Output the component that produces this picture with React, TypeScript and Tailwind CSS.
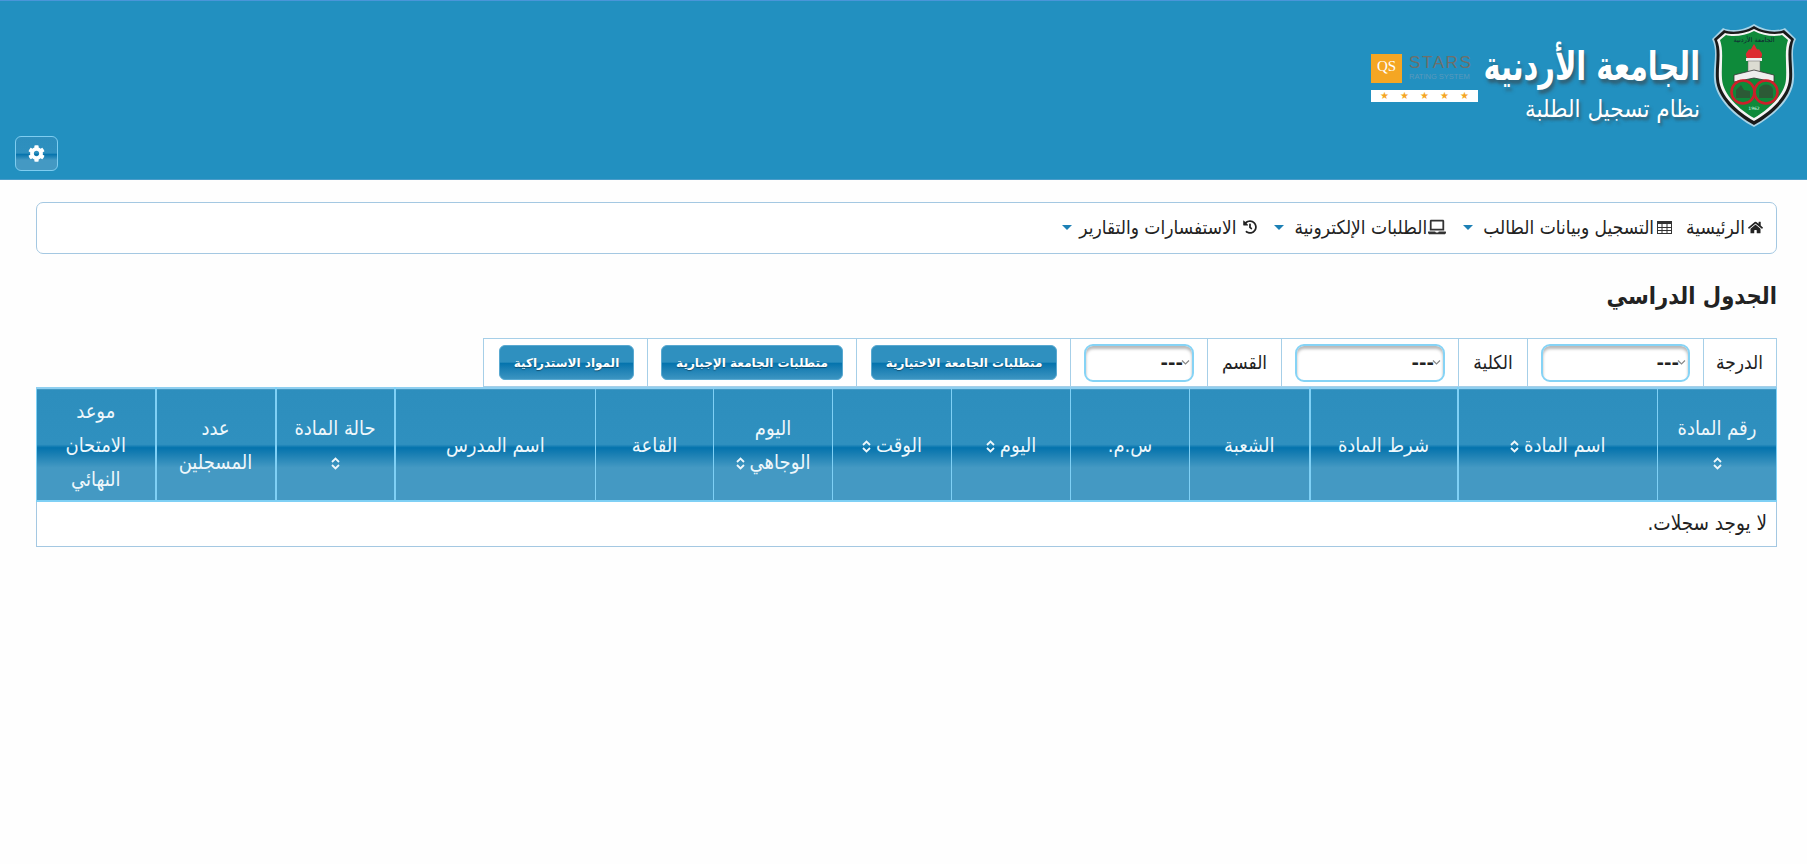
import { FaCog, FaHistory, FaHome, FaLaptop } from "react-icons/fa";

const grad = "bg-[linear-gradient(to_bottom,#2d8ebd_0%,#2f90bf_49%,#0473ad_52%,#1a7fb3_58%,#4499c3_70%,#4499c3_100%)]";
const btnGrad = "bg-[linear-gradient(to_bottom,#2f90bf_0%,#2f90bf_49%,#0473ad_52%,#1c80b4_70%,#3b94c1_100%)]";

function Sort() {
  return (
    <svg width="9" height="13" viewBox="0 0 9 13" className="inline-block align-[-1px]" fill="none" stroke="currentColor" strokeWidth="1.8">
      <path d="M1 5 L4.5 1.5 L8 5" />
      <path d="M1 8 L4.5 11.5 L8 8" />
    </svg>
  );
}

function Caret({ className }: { className: string }) {
  return <span className={`inline-block w-0 h-0 border-x-[5px] border-x-transparent border-t-[5px] border-t-[#1c80b5] shrink-0 ${className}`} />;
}

function TableIcon() {
  return (
    <svg width="15" height="13" viewBox="0 0 15 13" fill="none" stroke="#333" strokeWidth="1" className="shrink-0">
      <rect x="0.5" y="0.5" width="14" height="12" />
      <rect x="0" y="0" width="15" height="3" fill="#333" stroke="none" />
      <path d="M0 6.5 H15 M0 9.5 H15 M5 0 V13 M10 0 V13" />
    </svg>
  );
}

function Crest() {
  return (
    <svg width="86" height="105" viewBox="0 0 86 105" className="shrink-0">
      <path d="M43 1 C52 7 66 9 74 5 L85 16 C79 28 84 42 83 56 C82 76 62 94 43 104 C24 94 4 76 3 56 C2 42 7 28 1 16 L12 5 C20 9 34 7 43 1 Z" fill="#a9d3e6" />
      <path d="M43 3 C52 9 66 10 73 7 L83 16 C78 28 82 42 81 56 C80 75 61 92 43 102 C25 92 6 75 5 56 C4 42 8 28 3 16 L13 7 C20 10 34 9 43 3 Z" fill="#1a1a1a" />
      <path d="M43 6 C52 11 65 12 72 10 L80 17 C75 28 79 42 78 56 C77 73 59 89 43 98 C27 89 9 73 8 56 C7 42 11 28 6 17 L14 10 C21 12 34 11 43 6 Z" fill="#f4f4f4" />
      <path d="M43 8 C52 13 64 14 71 12 L77 17 C73 28 76 42 75 56 C74 72 57 87 43 95 C29 87 12 72 11 56 C10 42 13 28 9 17 L15 12 C22 14 34 13 43 8 Z" fill="#0e8a3a" />
      <text x="43" y="19" textAnchor="middle" fontSize="6.5" fill="#123" fontFamily="DejaVu Sans">الجامعة الأردنية</text>
      <path d="M36 35 C33 30 37 29 38 26 C40 28 41 24 43 21 C45 24 46 28 48 26 C49 29 53 30 50 35 Z" fill="#dc2a30" />
      <rect x="35" y="35" width="16" height="3" fill="#eee" />
      <rect x="37" y="38" width="12" height="11" fill="#dcdcd2" stroke="#666" strokeWidth="0.5" />
      <path d="M23 52 L43 47 L63 52 L63 59 L43 55 L23 59 Z" fill="#eee" stroke="#333" strokeWidth="0.8" />
      <circle cx="32" cy="69" r="11.5" fill="#0e8a3a" stroke="#cc1f2a" strokeWidth="2.6" />
      <circle cx="55" cy="69" r="11.5" fill="#0e8a3a" stroke="#cc1f2a" strokeWidth="2.6" />
      <path d="M25 75 L25 67 L30 62 L33 67 L39 68 L39 75 Z" fill="#2c5a36" />
      <path d="M48 75 L48 66 C50 60 60 60 62 66 L62 75 Z" fill="#2c5a36" />
      <text x="43" y="87" textAnchor="middle" fontSize="4.5" fill="#dfe" fontFamily="DejaVu Sans">1962</text>
    </svg>
  );
}

function QsLogo() {
  return (
    <div className="w-[107px] shrink-0 mt-[31px] mr-[5px] font-['Liberation_Sans',sans-serif]" dir="ltr">
      <div className="flex items-start gap-[7px] h-[28px]">
        <div className="w-[31px] h-[29px] bg-[#f5a623] text-white font-['Liberation_Serif',serif] text-[15px] leading-[24px] text-center shrink-0">QS</div>
        <div className="flex flex-col min-w-0">
          <div className="text-[#6f6f6a] text-[17px] leading-[18px] tracking-[1.6px] font-light">STARS</div>
          <div className="text-[#5a99bc] text-[7.5px] leading-[10px] whitespace-nowrap">RATING SYSTEM</div>
        </div>
      </div>
      <div className="mt-[8px] h-[12px] bg-white flex items-center justify-around px-[4px] text-[#f5a623] text-[10px] leading-none">
        <span>★</span><span>★</span><span>★</span><span>★</span><span>★</span>
      </div>
    </div>
  );
}

function LogoText() {
  return (
    <div className="flex flex-col items-start text-white whitespace-nowrap [text-shadow:2px_3px_3px_rgba(60,60,60,0.55)] mr-[11px] w-[217px] pt-[20px] font-['DejaVu_Sans_Condensed','DejaVu_Sans',sans-serif]">
      <div className="text-[32px] leading-[46px] font-bold scale-y-125">الجامعة الأردنية</div>
      <div className="text-[24px] leading-[36px] mt-[2px]">نظام تسجيل الطلبة</div>
    </div>
  );
}

const filterCell = "border border-[#a6cfe8] px-[13px] text-[19px] text-[#222]";
const btn = `${btnGrad} h-[35px] rounded-[6px] border border-[#59a9d1] text-white text-[12px] font-bold whitespace-nowrap [text-shadow:0_1px_1px_rgba(0,0,0,0.4)] font-['DejaVu_Sans',sans-serif]`;

function Sel({ w }: { w: string }) {
  return (
    <div className={`relative h-[38px] ${w}`}>
      <select className="w-full h-full appearance-none bg-white rounded-[9px] border-2 border-[#86d3f5] shadow-[inset_0_3px_3px_rgba(0,0,0,0.28)] pr-[9px] text-[18px] font-bold text-[#222] font-['DejaVu_Sans',sans-serif]">
        <option>---</option>
      </select>
      <svg className="absolute right-[4px] top-[15px]" width="9" height="7" viewBox="0 0 9 7" fill="none" stroke="#888" strokeWidth="1.2">
        <path d="M1 1.5 L4.5 5 L8 1.5" />
      </svg>
    </div>
  );
}

const cols: { label: string[]; w: string; sort?: "inline" | "below"; thick?: boolean }[] = [
  { label: ["رقم المادة"], w: "w-[119px]", sort: "below" },
  { label: ["اسم المادة"], w: "w-[200px]", sort: "inline", thick: true },
  { label: ["شرط المادة"], w: "w-[148px]", thick: true },
  { label: ["الشعبة"], w: "w-[120px]" },
  { label: ["س.م."], w: "w-[119px]" },
  { label: ["اليوم"], w: "w-[119px]", sort: "inline" },
  { label: ["الوقت"], w: "w-[119px]", sort: "inline" },
  { label: ["اليوم", "الوجاهي"], w: "w-[119px]", sort: "inline" },
  { label: ["القاعة"], w: "w-[118px]" },
  { label: ["اسم المدرس"], w: "w-[201px]", thick: true },
  { label: ["حالة المادة"], w: "w-[119px]", sort: "below", thick: true },
  { label: ["عدد", "المسجلين"], w: "w-[120px]", thick: true },
  { label: ["موعد", "الامتحان", "النهائي"], w: "w-[119px]" },
];

export default function App() {
  return (
    <div dir="rtl" className="min-h-[864px] bg-[#fefefe] font-['DejaVu_Sans_Condensed','DejaVu_Sans',sans-serif] text-[#222]">
      <header className="h-[180px] bg-[#2290c0] border-t-[1px] border-t-[#4a95d9] border-b border-b-[#4b9cc9] flex flex-col justify-between">
        <div className="flex items-start pr-[10px] pt-[22px]">
          <Crest />
          <LogoText />
          <QsLogo />
        </div>
        <button className={`${grad} self-end ml-[15px] mb-[8px] w-[43px] h-[35px] rounded-[6px] border border-[#7fcdf0] text-white flex items-center justify-center`}>
          <FaCog size={17} />
        </button>
      </header>

      <main className="pr-[30px] pl-[36px] pt-[22px]">
        <nav className="h-[52px] border border-[#a4c8e2] rounded-[7px] flex items-center pr-[13px] pb-[2px] text-[19px] bg-white">
          <span className="flex items-center gap-[3px] ml-[14px]"><FaHome size={15} />الرئيسية</span>
          <span className="flex items-center gap-[3px]"><TableIcon />التسجيل وبيانات الطالب<Caret className="mr-[7px]" /></span>
          <span className="flex items-center gap-[1px] mr-[17px]"><FaLaptop size={18} className="text-[#333]" />الطلبات الإلكترونية<Caret className="mr-[10px]" /></span>
          <span className="flex items-center gap-[6px] mr-[17px]"><FaHistory size={14} />الاستفسارات والتقارير<Caret className="mr-[1px]" /></span>
        </nav>

        <h1 className="mt-[24px] text-[23.5px] leading-[36px] font-bold text-[#222]">الجدول الدراسي</h1>

        <table className="mt-[24px] table-fixed border-collapse w-[1293px] h-[49px] bg-white">
          <colgroup>
            <col className="w-[73px]" /><col className="w-[176px]" /><col className="w-[69px]" /><col className="w-[177px]" /><col className="w-[74px]" /><col className="w-[137px]" /><col className="w-[214px]" /><col className="w-[209px]" /><col className="w-[164px]" />
          </colgroup>
          <tbody>
            <tr>
              <td className={`${filterCell} text-center`}>الدرجة</td>
              <td className={filterCell}><Sel w="w-[149px]" /></td>
              <td className={`${filterCell} text-center`}>الكلية</td>
              <td className={filterCell}><Sel w="w-[150px]" /></td>
              <td className={`${filterCell} text-center`}>القسم</td>
              <td className={filterCell}><Sel w="w-[110px]" /></td>
              <td className={filterCell}><button className={`${btn} w-[186px]`}>متطلبات الجامعة الاختيارية</button></td>
              <td className={filterCell}><button className={`${btn} w-[182px]`}>متطلبات الجامعة الإجبارية</button></td>
              <td className={filterCell}><button className={`${btn} w-[135px]`}>المواد الاستدراكية</button></td>
            </tr>
          </tbody>
        </table>

        <table className="table-fixed border-collapse w-[1741px]">
          <colgroup>
            {cols.map((c, i) => <col key={i} className={c.w} />)}
          </colgroup>
          <thead>
            <tr className={`${grad} h-[113px] border-t-2 border-t-[#8fcff0]`}>
              {cols.map((c, i) => (
                <th key={i} className={`${c.thick ? "border-l-2" : "border-l"} border-[#7fd0f5] first:border-r border-r-[#7fd0f5] border-b-2 border-b-[#7fd0f5] px-[4px] text-center font-normal text-[20px] leading-[34px] text-[#eef7fb]`}>
                  {c.label.map((l, j) => (
                    <div key={j} className="whitespace-nowrap">
                      {l}
                      {c.sort === "inline" && j === c.label.length - 1 && <span className="mr-[5px]"><Sort /></span>}
                    </div>
                  ))}
                  {c.sort === "below" && <div><Sort /></div>}
                </th>
              ))}
            </tr>
          </thead>
          <tbody>
            <tr>
              <td colSpan={13} className="h-[45px] border border-[#a4c8e2] border-t-0 px-[9px] text-[20.5px] bg-white">لا يوجد سجلات.</td>
            </tr>
          </tbody>
        </table>
      </main>
    </div>
  );
}
